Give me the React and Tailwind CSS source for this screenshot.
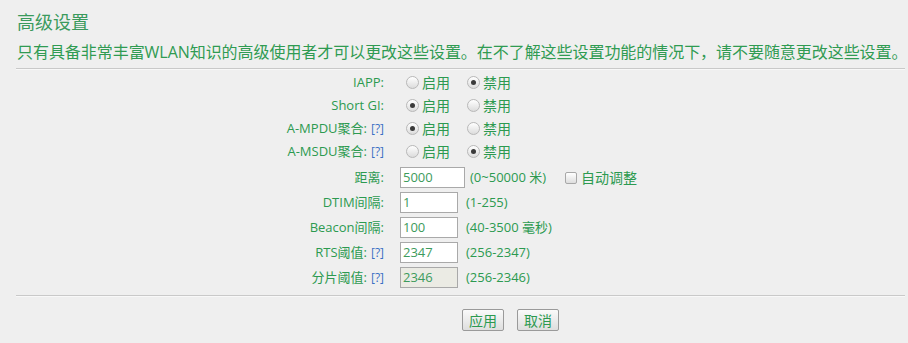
import React from 'react';

const font = { fontFamily: '"Open Sans", "Noto Sans CJK SC", sans-serif' };

function Radio({ checked }) {
  return (
    <span className="inline-flex w-[13px] h-[13px] rounded-full border border-[#b8b8b8] bg-gradient-to-b from-[#ffffff] to-[#dcdcdc] items-center justify-center">
      {checked && <span className="w-[5px] h-[5px] rounded-full bg-[#3a3a3a]" />}
    </span>
  );
}

function Help() {
  return <span className="text-[#3a6fc4] text-[12px] ml-[4px]">[?]</span>;
}

function RadioPair({ on }) {
  return (
    <div className="flex items-center text-[14px]">
      <span className="ml-[6px] mr-[3px] flex"><Radio checked={on} /></span>
      <span className="mr-[17px]">启用</span>
      <span className="mr-[3px] flex"><Radio checked={!on} /></span>
      <span>禁用</span>
    </div>
  );
}

function Field({ value, w = 'w-[58px]', disabled }) {
  return (
    <div
      className={`${w} h-[21px] border border-[#a9a9a9] px-[2px] flex items-center text-[13px] ${disabled ? 'bg-[#ebebe4] text-[#3d9b5c]' : 'bg-white text-[#3d9b5c]'}`}
    >
      {value}
    </div>
  );
}

export default function App() {
  const radios = [
    { label: 'IAPP:', on: false },
    { label: 'Short GI:', on: true },
    { label: 'A-MPDU聚合:', on: true, help: true },
    { label: 'A-MSDU聚合:', on: false, help: true },
  ];
  const fields = [
    { label: 'DTIM间隔:', value: '1', hint: '(1-255)' },
    { label: 'Beacon间隔:', value: '100', hint: '(40-3500 毫秒)' },
    { label: 'RTS阈值:', value: '2347', hint: '(256-2347)', help: true },
    { label: '分片阈值:', value: '2346', hint: '(256-2346)', help: true, disabled: true },
  ];

  return (
    <div className="w-[908px] h-[343px] bg-[#efefef] text-[#2c9a50] overflow-hidden" style={font}>
      <div className="pl-[17px] pt-[10px]">
        <div className="text-[18px] leading-[24px] text-[#3a9a5c]">高级设置</div>
        <div className="text-[16px] leading-[22px] mt-[7px] whitespace-nowrap tracking-[-0.05px] text-[#2f9b52]">
          只有具备非常丰富WLAN知识的高级使用者才可以更改这些设置。在不了解这些设置功能的情况下，请不要随意更改这些设置。
        </div>
      </div>
      <div className="ml-[16px] mr-[3px] mt-[5px] h-px bg-[#c9c9c9]" />
      <div className="ml-[16px] mr-[3px] h-px bg-[#f8f8f8]" />

      <div className="pt-[1px] text-[13px]">
        {radios.map((r) => (
          <div key={r.label} className="flex items-center h-[23px]">
            <div className="w-[386px] text-right pr-[2px] flex justify-end items-center">
              <span>{r.label}</span>
              {r.help && <Help />}
            </div>
            <div className="pl-[14px]">
              <RadioPair on={r.on} />
            </div>
          </div>
        ))}

        <div className="flex items-center h-[25px] mt-[2px]">
          <div className="w-[386px] text-right pr-[2px]">距离:</div>
          <div className="pl-[14px] flex items-center">
            <Field value="5000" w="w-[65px]" />
            <span className="ml-[5px]">(0~50000 米)</span>
            <span className="ml-[19px] mr-[4px] w-[12px] h-[12px] rounded-[2px] border border-[#a8a8a8] bg-gradient-to-b from-[#ffffff] to-[#dedede]" />
            <span className="text-[14px]">自动调整</span>
          </div>
        </div>

        {fields.map((f) => (
          <div key={f.label} className="flex items-center h-[25px]">
            <div className="w-[386px] text-right pr-[2px] flex justify-end items-center">
              <span>{f.label}</span>
              {f.help && <Help />}
            </div>
            <div className="pl-[14px] flex items-center">
              <Field value={f.value} disabled={f.disabled} />
              <span className="ml-[8px]">{f.hint}</span>
            </div>
          </div>
        ))}
      </div>

      <div className="ml-[16px] mr-[3px] mt-[5px] h-px bg-[#c9c9c9]" />
      <div className="ml-[16px] mr-[3px] h-px bg-[#f8f8f8]" />

      <div className="flex gap-[13px] pt-[12px] pl-[462px]">
        <button className="w-[42px] h-[22px] border border-[#9a9a9a] rounded-[2px] bg-gradient-to-b from-[#fafafa] to-[#dedede] text-[14px] text-[#2c9a50]">
          应用
        </button>
        <button className="w-[42px] h-[22px] border border-[#9a9a9a] rounded-[2px] bg-gradient-to-b from-[#fafafa] to-[#dedede] text-[14px] text-[#2c9a50]">
          取消
        </button>
      </div>
    </div>
  );
}
